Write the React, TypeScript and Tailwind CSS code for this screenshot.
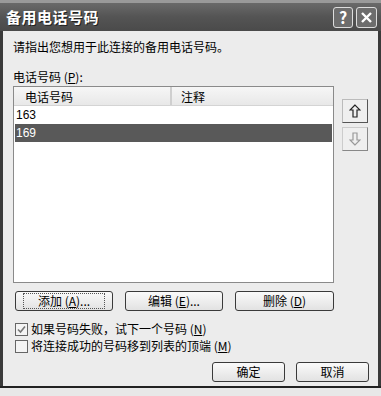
import React from "react";

const font = { fontFamily: '"Noto Sans CJK SC", "Liberation Sans", sans-serif' };

function Btn({ children, w, focused }: { children: React.ReactNode; w: string; focused?: boolean }) {
  return (
    <div
      className={`${w} h-[20px] rounded-[3px] border border-[#3a3a3a] bg-gradient-to-b from-[#fafafa] to-[#e2e2e2] flex items-center justify-center text-[12px] text-black leading-none`}
    >
      <div className={focused ? "border border-dotted border-[#555] px-[14px] py-[1px]" : ""}>{children}</div>
    </div>
  );
}

function U({ c }: { c: string }) {
  return <span className="underline">{c}</span>;
}

export default function App() {
  return (
    <div className="w-[381px] h-[396px] bg-[#3a3a3a] overflow-hidden relative" style={font}>
      {/* title bar */}
      <div className="h-[31px] border-t-[3px] border-[#9a9a9a] bg-gradient-to-b from-[#6a6a6a] via-[#545454] to-[#4a4a4a] flex items-center pl-[6px] pr-[4px]">
        <span className="text-white font-bold text-[15px] tracking-[0.5px] [text-shadow:1px_1px_0_#222]">备用电话号码</span>
        <div className="ml-auto flex gap-[3px]">
          <div className="w-[20px] h-[21px] rounded-[3px] border border-[#ddd] bg-[#6d6d6d] flex items-center justify-center text-white font-bold text-[16px] leading-none">?</div>
          <div className="w-[21px] h-[21px] rounded-[3px] border border-[#ddd] bg-[#6d6d6d] flex items-center justify-center">
            <svg width="13" height="13" viewBox="0 0 13 13">
              <path d="M2 2 L11 11 M11 2 L2 11" stroke="white" strokeWidth="2.4" />
            </svg>
          </div>
        </div>
      </div>
      {/* body */}
      <div className="mx-[3px] h-[355px] bg-[#ececec] pl-[10px] pr-[8px] pt-[8px] flex flex-col text-[12px] text-black">
        <div className="leading-[16px] h-[16px]">请指出您想用于此连接的备用电话号码。</div>
        <div className="leading-[16px] h-[16px] mt-[14px]">电话号码 (<U c="P" />):</div>
        <div className="flex mt-[1px]">
          <div className="w-[321px] h-[197px] border border-[#8a8a8a] bg-white flex flex-col">
            <div className="h-[19px] flex bg-gradient-to-b from-[#f6f6f6] to-[#e8e8e8] border-b border-[#d4d4d4] text-[12px] leading-[19px]">
              <div className="w-[158px] pl-[11px] border-r-[2px] border-[#cfcfcf]">电话号码</div>
              <div className="pl-[9px]">注释</div>
            </div>
            <div className="h-[18px] pl-[2px] leading-[18px] font-['Liberation_Sans'] text-[12px]">163</div>
            <div className="h-[18px] mx-[1px] pl-[1px] leading-[18px] bg-[#595959] text-white font-['Liberation_Sans'] text-[12px]">169</div>
          </div>
          <div className="ml-[8px] mt-[13px] flex flex-col gap-[4px]">
            <div className="w-[26px] h-[24px] border border-[#bbb] border-r-[#555] border-b-[#555] bg-[#efefef] flex items-center justify-center">
              <svg width="12" height="14" viewBox="0 0 12 14">
                <path d="M6 1 L1 6 H4 V13 H8 V6 H11 Z" fill="none" stroke="#222" strokeWidth="1.2" />
              </svg>
            </div>
            <div className="w-[26px] h-[24px] border border-[#ccc] border-r-[#888] border-b-[#888] bg-[#efefef] flex items-center justify-center">
              <svg width="12" height="14" viewBox="0 0 12 14">
                <path d="M6 13 L1 8 H4 V1 H8 V8 H11 Z" fill="none" stroke="#999" strokeWidth="1.2" />
              </svg>
            </div>
          </div>
        </div>
        <div className="flex mt-[8px] ml-[2px] gap-[12px]">
          <Btn w="w-[98px]" focused>添加 (<U c="A" />)...</Btn>
          <Btn w="w-[98px]">编辑 (<U c="E" />)...</Btn>
          <Btn w="w-[99px]">删除 (<U c="D" />)</Btn>
        </div>
        <div className="mt-[11px] ml-[2px] flex flex-col gap-[3px]">
          <div className="flex items-center gap-[3px] h-[14px]">
            <div className="w-[13px] h-[13px] border border-[#666] bg-[#f4f4f4] flex items-center justify-center">
              <svg width="9" height="9" viewBox="0 0 9 9">
                <path d="M1 4.5 L3.5 7 L8 1.5" fill="none" stroke="#777" strokeWidth="1.6" />
              </svg>
            </div>
            <span className="text-[12px] leading-[14px]">如果号码失败，试下一个号码 (<U c="N" />)</span>
          </div>
          <div className="flex items-center gap-[3px] h-[14px]">
            <div className="w-[13px] h-[13px] border border-[#666] bg-[#f4f4f4]" />
            <span className="text-[12px] leading-[14px]">将连接成功的号码移到列表的顶端 (<U c="M" />)</span>
          </div>
        </div>
        <div className="flex justify-end mt-[9px] gap-[11px] pr-[1px]">
          <Btn w="w-[73px]">确定</Btn>
          <Btn w="w-[73px]">取消</Btn>
        </div>
      </div>
      <div className="h-[2px] bg-[#222]" />
      <div className="h-[10px] bg-[#e8e8e8]" />
    </div>
  );
}
